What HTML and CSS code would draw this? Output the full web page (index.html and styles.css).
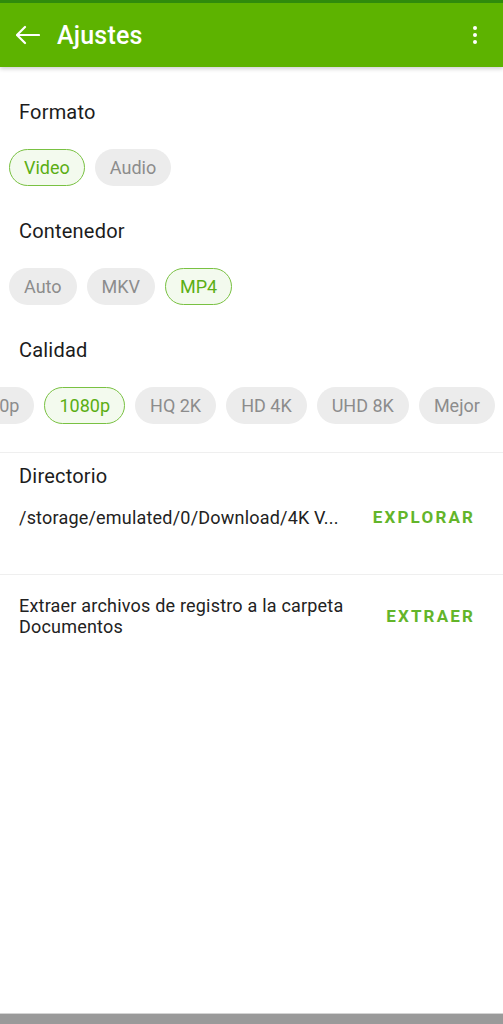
FILE: index.html
```html
<!DOCTYPE html>
<html lang="es">
<head>
    <meta charset="UTF-8">
    <meta name="viewport" content="width=device-width, initial-scale=1.0">
    <title>Ajustes</title>
    <link rel="stylesheet" href="styles.css">
</head>
<body>

<header class="appbar">
    <svg class="back" width="24" height="24" viewBox="0 0 24 24">
        <path d="M1 12H23M9 4L1 12L9 20" fill="none" stroke="#fff" stroke-width="2.2" stroke-linecap="round" stroke-linejoin="round"/>
    </svg>
    <h1>Ajustes</h1>
    <svg class="menu" width="24" height="24" viewBox="0 0 24 24">
        <circle cx="12" cy="5" r="2" fill="#fff"/>
        <circle cx="12" cy="12" r="2" fill="#fff"/>
        <circle cx="12" cy="19" r="2" fill="#fff"/>
    </svg>
</header>

<main class="settings">
    <section class="group">
        <h2>Formato</h2>
        <div class="chips">
            <span class="chip selected">Video</span>
            <span class="chip">Audio</span>
        </div>
    </section>

    <section class="group">
        <h2>Contenedor</h2>
        <div class="chips">
            <span class="chip">Auto</span>
            <span class="chip">MKV</span>
            <span class="chip selected">MP4</span>
        </div>
    </section>

    <section class="group">
        <h2>Calidad</h2>
        <div class="chips scroll">
            <div class="chips-track">
                <span class="chip">720p</span>
                <span class="chip selected">1080p</span>
                <span class="chip">HQ 2K</span>
                <span class="chip">HD 4K</span>
                <span class="chip">UHD 8K</span>
                <span class="chip">Mejor</span>
            </div>
        </div>
    </section>

    <section class="row-block directory">
        <h2>Directorio</h2>
        <div class="row">
            <span class="path">/storage/emulated/0/Download/4K V...</span>
            <button class="text-btn">EXPLORAR</button>
        </div>
    </section>

    <section class="row-block logs">
        <div class="row">
            <span class="desc">Extraer archivos de registro a la carpeta Documentos</span>
            <button class="text-btn">EXTRAER</button>
        </div>
    </section>
</main>

<div class="navbar"></div>

</body>
</html>
```

FILE: styles.css
```css
* {
    box-sizing: border-box;
}
html, body {
    height: 100%;
}
body {
    margin: 0;
    font-family: Roboto, "Noto Sans", Arial, sans-serif;
    background: #fff;
    color: #1c1c1c;
    display: flex;
    flex-direction: column;
}
.appbar {
    height: 67px;
    border-top: 3px solid #2f8b0c;
    background-color: #5db300;
    display: flex;
    align-items: center;
    padding: 0 16px;
    color: #fff;
    box-shadow: 0 2px 4px rgba(0,0,0,0.18);
    position: relative;
    z-index: 1;
}
.appbar h1 {
    margin: 0 0 0 17px;
    font-size: 25px;
    font-weight: 500;
    flex: 1;
    letter-spacing: 0.2px;
}
.settings {
    flex: 1;
    padding-top: 33px;
}
.group {
    margin-bottom: 33px;
}
h2 {
    margin: 0 19px;
    font-size: 20px;
    line-height: 24px;
    font-weight: 400;
    letter-spacing: 0.2px;
}
.chips {
    display: flex;
    gap: 10px;
    padding: 0 9px;
    margin-top: 25px;
}
.chips.scroll {
    padding: 0;
    overflow: hidden;
}
.chips-track {
    display: flex;
    gap: 10px;
    margin-left: -36px;
}
.chip {
    flex: none;
    height: 37px;
    padding: 0 14px;
    border: 1px solid transparent;
    border-radius: 19px;
    background: #ececec;
    color: #8c8c8c;
    font-size: 18px;
    line-height: 35px;
}
.chip.selected {
    background: #f3faee;
    border-color: #79c142;
    color: #5bae14;
}
.group:nth-child(3) {
    margin-bottom: 28px;
}
.row-block {
    border-top: 1px solid #efefef;
}
.directory {
    padding: 11px 0 35px;
}
.directory h2 {
    margin-bottom: 7px;
}
.row {
    display: flex;
    align-items: center;
    padding-left: 19px;
    padding-right: 30px;
}
.path, .desc {
    flex: 1;
    font-size: 18px;
    line-height: 21px;
    letter-spacing: 0.2px;
    color: #222;
}
.desc {
    padding-right: 24px;
}
.logs {
    padding-top: 19px;
}
.text-btn {
    background: none;
    border: none;
    padding: 12px 0;
    font-family: inherit;
    font-size: 17px;
    font-weight: 700;
    letter-spacing: 2.2px;
    margin-right: -2.2px;
    color: #63b52a;
    cursor: pointer;
}
.navbar {
    height: 11px;
    background: #9a9a9a;
    border-top: 1px solid #d4d4d4;
}
```
